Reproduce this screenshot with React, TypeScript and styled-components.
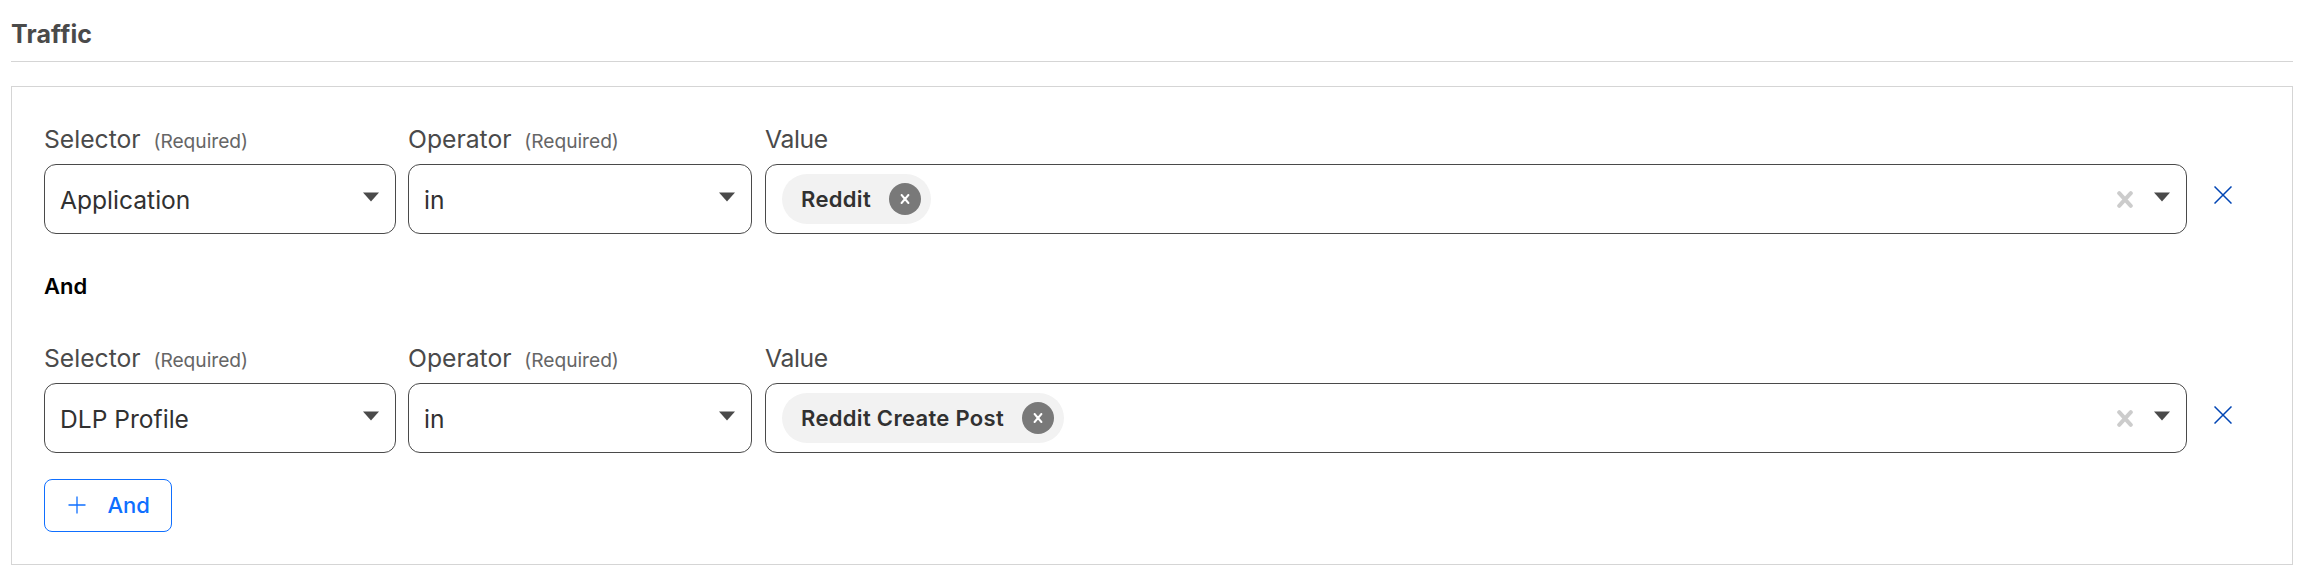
import React from "react";
import styled, { createGlobalStyle } from "styled-components";

const GlobalStyle = createGlobalStyle`
  *, *::before, *::after { box-sizing: border-box; }
  body {
    margin: 0;
    background: #fff;
    color: #4a4a4a;
    font-family: Inter, "Liberation Sans", sans-serif;
  }
  button { font-family: inherit; padding: 0; background: none; border: 0; cursor: pointer; }
`;

const Page = styled.main`
  padding: 0 17px 0 11px;
`;

const Heading = styled.h2`
  margin: 0;
  padding: 19px 0 12px;
  border-bottom: 1px solid #d5d5d5;
  font-size: 25px;
  font-weight: 700;
  line-height: 30px;
  letter-spacing: 0.15px;
`;

const Panel = styled.section`
  margin-top: 24px;
  height: 479px;
  padding: 37px 32px 0;
  border: 1px solid #d5d5d5;
`;

const ConditionRow = styled.div`
  display: flex;
  align-items: flex-start;
`;

const Field = styled.div<{ $width: number; $gap?: number }>`
  width: ${(p) => p.$width}px;
  margin-right: ${(p) => p.$gap ?? 0}px;
`;

const Label = styled.div<{ $spacing?: number }>`
  display: flex;
  align-items: baseline;
  height: 30px;
  margin-bottom: 10px;
  font-size: 24.7px;
  line-height: 30px;
  letter-spacing: ${(p) => p.$spacing ?? 0}px;
`;

const Required = styled.span`
  margin-left: 12.8px;
  color: #666;
  font-size: 19.2px;
  letter-spacing: -0.03px;
`;

const Control = styled.div`
  display: flex;
  align-items: center;
  height: 70px;
  padding: 0 16px;
  border: 1px solid #4a4a4a;
  border-radius: 12px;
`;

const Selected = styled.span`
  flex: 1;
  margin-left: -1px;
  padding-top: 2px;
  color: #313131;
  font-size: 24.6px;
  line-height: 30px;
`;

const Chip = styled.span`
  display: flex;
  align-items: center;
  height: 50px;
  padding: 0 10px 0 19px;
  border-radius: 25px;
  background: #f2f2f2;
  color: #313131;
  font-size: 22px;
  font-weight: 600;
  letter-spacing: 0.32px;
`;

const ChipRemove = styled.button`
  display: flex;
  align-items: center;
  justify-content: center;
  width: 32px;
  height: 32px;
  margin-left: 17.6px;
  border-radius: 50%;
  background: #797979;
`;

const Indicators = styled.div`
  display: flex;
  align-items: center;
  gap: 21px;
  margin-left: auto;
`;

const Caret = styled.svg`
  display: block;
  width: 16px;
  height: 10px;
  margin-bottom: 5px;
  fill: #4a4a4a;
`;

const RemoveRow = styled.button<{ $top: number }>`
  width: 18px;
  height: 18px;
  margin: ${(p) => p.$top}px 0 0 27px;
`;

const Icon = styled.svg`
  display: block;
`;

const Joiner = styled.div`
  padding: 37px 0 42px;
  color: #000;
  font-size: 22px;
  font-weight: 600;
  line-height: 30px;
`;

const AddButton = styled.button`
  display: flex;
  align-items: center;
  width: 128px;
  height: 53px;
  margin-top: 26px;
  padding: 0 0 1px 23px;
  gap: 21.5px;
  border: 1px solid #0f6fff;
  border-radius: 8px;
  color: #0f6fff;
  font-size: 22px;
  font-weight: 500;
`;

const CaretDown = () => (
  <Caret viewBox="0 0 16 10">
    <path d="M0 .5h16L8 9.5z" />
  </Caret>
);

type SelectFieldProps = { label: string; value: string; width: number; gap: number };

const SelectField = ({ label, value, width, gap }: SelectFieldProps) => (
  <Field $width={width} $gap={gap}>
    <Label>
      {label}
      <Required>(Required)</Required>
    </Label>
    <Control>
      <Selected>{value}</Selected>
      <CaretDown />
    </Control>
  </Field>
);

const ValueField = ({ value }: { value: string }) => (
  <Field $width={1422}>
    <Label $spacing={-0.35}>Value</Label>
    <Control>
      <Chip>
        {value}
        <ChipRemove aria-label={`Remove ${value}`}>
          <Icon width="10" height="10" viewBox="0 0 10 10" stroke="#fff" strokeWidth="2.2" strokeLinecap="round">
            <path d="M1.7 1.1l6.6 7.8M8.3 1.1L1.7 8.9" />
          </Icon>
        </ChipRemove>
      </Chip>
      <Indicators>
        <Icon width="16" height="17" viewBox="0 0 16 17" stroke="#ccc" strokeWidth="4" strokeLinecap="round">
          <path d="M2.2 2.2l11.6 12.6M13.8 2.2L2.2 14.8" />
        </Icon>
        <CaretDown />
      </Indicators>
    </Control>
  </Field>
);

type ConditionProps = { selector: string; operator: string; value: string; removeTop: number };

const Condition = ({ selector, operator, value, removeTop }: ConditionProps) => (
  <ConditionRow>
    <SelectField label="Selector" value={selector} width={352} gap={12} />
    <SelectField label="Operator" value={operator} width={344} gap={13} />
    <ValueField value={value} />
    <RemoveRow $top={removeTop} aria-label="Remove condition">
      <Icon width="18" height="18" viewBox="0 0 18 18" stroke="#0045b4" strokeWidth="1.5">
        <path d="M.5.5l17 17M17.5.5l-17 17" />
      </Icon>
    </RemoveRow>
  </ConditionRow>
);

export default function App() {
  return (
    <Page>
      <GlobalStyle />
      <Heading>Traffic</Heading>
      <Panel>
        <Condition selector="Application" operator="in" value="Reddit" removeTop={62} />
        <Joiner>And</Joiner>
        <Condition selector="DLP Profile" operator="in" value="Reddit Create Post" removeTop={63} />
        <AddButton>
          <Icon width="18" height="18" viewBox="0 0 18 18" stroke="#0f6fff" strokeWidth="1.3">
            <path d="M9 .5v17M.5 9h17" />
          </Icon>
          And
        </AddButton>
      </Panel>
    </Page>
  );
}
